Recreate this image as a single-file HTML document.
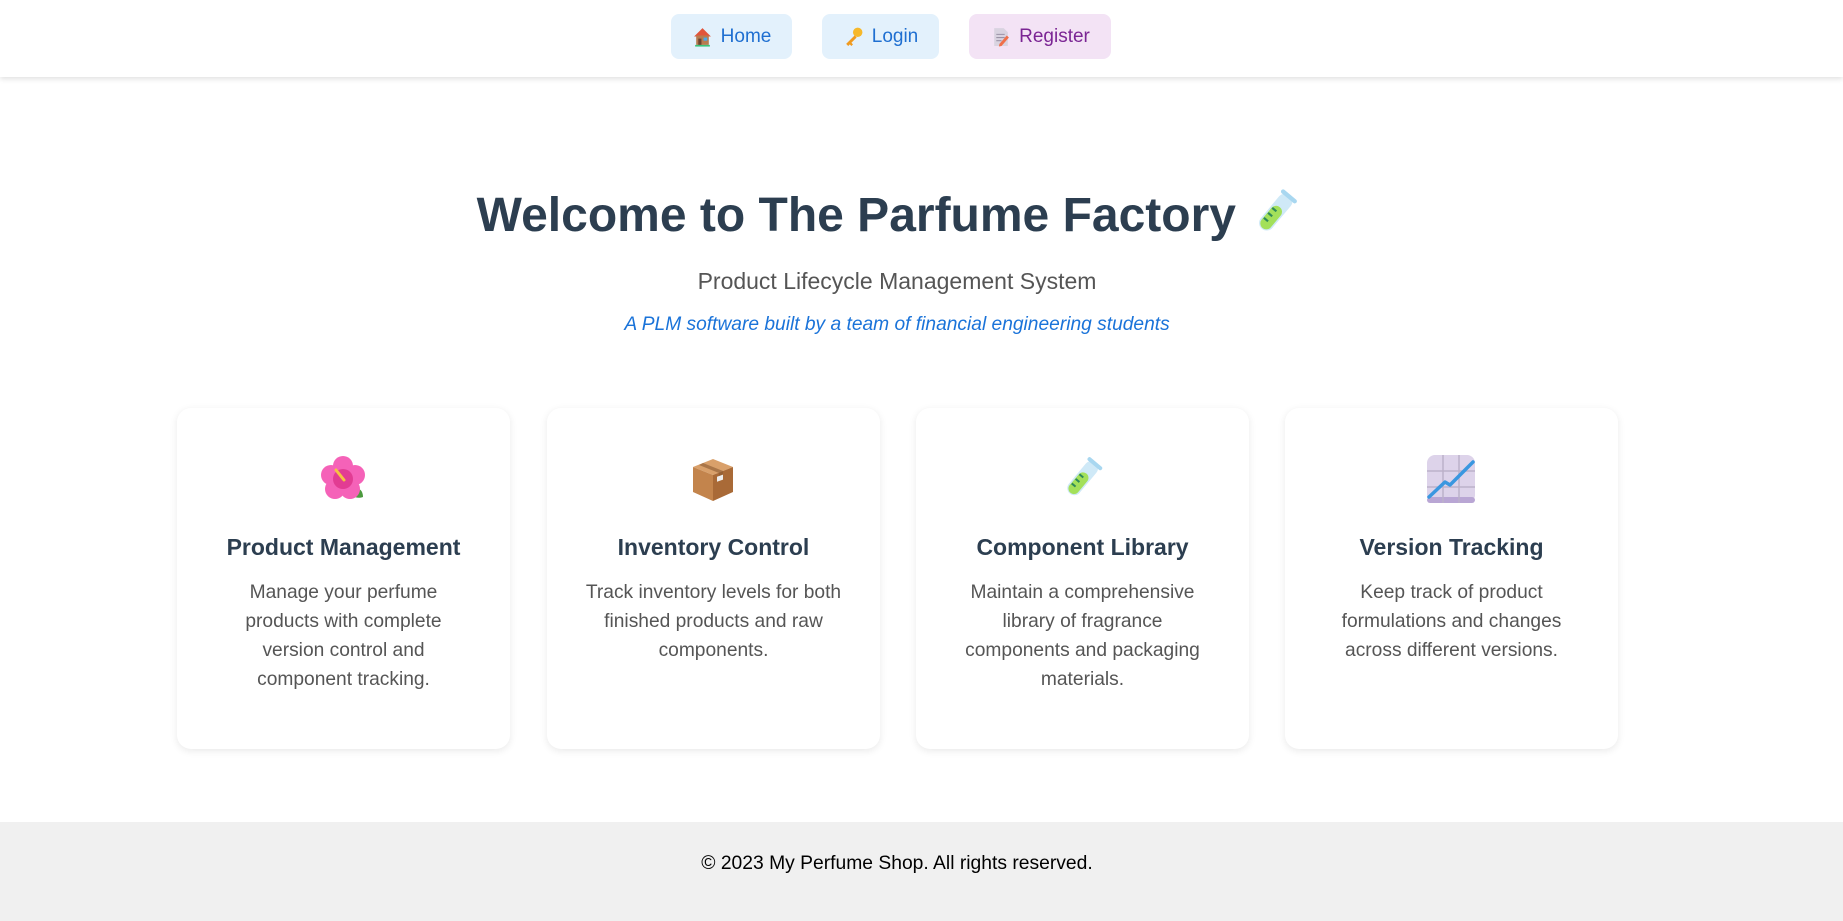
<!DOCTYPE html>
<html><head><meta charset="utf-8">
<style>
*{margin:0;padding:0;box-sizing:border-box}
body{width:1843px;height:921px;background:#fff;font-family:"Liberation Sans",Arial,sans-serif;position:relative;overflow:hidden}
.nav{position:absolute;left:0;top:0;width:1843px;height:77px;background:#fff;box-shadow:0 2px 5px rgba(0,0,0,0.12)}
.btn{position:absolute;top:14px;height:45px;border-radius:8px;font-size:19px;display:flex;align-items:center;justify-content:center;gap:8px}
.b1{left:671px;width:121px;background:#e3f1fc;color:#1f6fd1}
.b2{left:822px;width:117px;background:#e3f1fc;color:#1f6fd1}
.b3{left:969px;width:142px;background:#f3e3f5;color:#7b2594}
h1{position:absolute;left:0;width:1778px;top:186px;text-align:center;font-size:48px;font-weight:bold;color:#2c3e50;line-height:60px}
.sub{position:absolute;left:0;width:1794px;top:268px;text-align:center;font-size:23px;color:#555;line-height:27px}
.tag{position:absolute;left:0;width:1794px;top:313px;text-align:center;font-size:19.2px;font-style:italic;color:#1a73d9;line-height:24px}
.card{position:absolute;top:408px;width:333px;height:341px;background:#fff;border-radius:14px;box-shadow:0 2px 8px rgba(0,0,0,0.09);text-align:center}
.ic{position:absolute;left:142px;top:47px;width:48px;height:48px}
.card h3{position:absolute;top:124px;left:0;width:100%;font-size:23px;font-weight:bold;color:#2c3e50;line-height:30px}
.card p{position:absolute;top:170px;left:37px;right:37px;font-size:19.2px;color:#555;line-height:29px}
.foot{position:absolute;left:0;top:822px;width:1794px;height:99px;text-align:center;font-size:19.3px;color:#000;line-height:84px}
.footbg{position:absolute;left:0;top:822px;width:1843px;height:99px;background:#f0f0f0}
</style></head><body>
<div class="nav">
<div class="btn b1"><svg width="21" height="21" viewBox="0 0 20 20"><path d="M2 10 L10 2 L18 10Z" fill="#e2543a"/><rect x="4" y="9" width="12" height="9" fill="#b87b4f"/><rect x="11" y="11" width="3.5" height="3" fill="#4aa8e8"/><rect x="6" y="12" width="3" height="6" fill="#6d4330"/><rect x="3" y="18" width="14" height="1.6" fill="#3cc27a"/></svg>Home</div>
<div class="btn b2"><svg width="21" height="21" viewBox="0 0 20 20"><circle cx="14" cy="6" r="4.5" fill="#f6b82a"/><path d="M11 9 L3 17 L5 19 L6.5 17.5 L8 19 L9.5 17.5 L8 16 L13 11Z" fill="#f09a1f"/></svg>Login</div>
<div class="btn b3"><svg width="21" height="21" viewBox="0 0 20 20"><path d="M4 2 H13 L17 6 V19 H4Z" fill="#d9d3e0"/><path d="M6 8H14M6 11H14M6 14H11" stroke="#9b93a6" stroke-width="1"/><path d="M9 17 L16 9 L18 11 L11 19 L8.5 19.5Z" fill="#f0704a"/></svg>Register</div>
</div>
<h1>Welcome to The Parfume Factory <svg width="52" height="52" viewBox="0 0 48 48" style="vertical-align:-8px"><g transform="rotate(40 24 24)"><rect x="17" y="3" width="14" height="40" rx="7" fill="#cfe9f7"/><rect x="18.5" y="17" width="11" height="25" rx="5.5" fill="#a3e05a"/><rect x="15" y="2" width="18" height="4" rx="2" fill="#a8d7f0"/><path d="M19 22h5M19 28h5M19 34h5" stroke="#2e8a5a" stroke-width="2"/></g></svg></h1>
<div class="sub">Product Lifecycle Management System</div>
<div class="tag">A PLM software built by a team of financial engineering students</div>

<div class="card" style="left:177px">
<svg class="ic" viewBox="0 0 48 48"><path d="M32 36 C40 30 44 36 44 42 C38 44 33 42 32 36Z" fill="#4c9a3f"/><g fill="#f562b8"><circle cx="24" cy="11" r="10"/><circle cx="36" cy="20" r="10"/><circle cx="31" cy="34" r="10"/><circle cx="16" cy="34" r="10"/><circle cx="12" cy="20" r="10"/></g><circle cx="24" cy="24" r="10" fill="#e23c93"/><path d="M17 15 L25 25" stroke="#f5c242" stroke-width="3" stroke-linecap="round"/></svg>
<h3>Product Management</h3>
<p>Manage your perfume products with complete version control and component tracking.</p></div>

<div class="card" style="left:547px">
<svg class="ic" viewBox="0 0 48 48"><path d="M24 4 L44 12 L24 20 L4 12Z" fill="#d9a06a"/><path d="M4 12 L24 20 V46 L4 37Z" fill="#c3844c"/><path d="M44 12 L24 20 V46 L44 37Z" fill="#a96a37"/><path d="M14 8 L34 16 V24 L30 26 V18 L10 10Z" fill="#8a5a32" opacity=".6"/><rect x="28" y="32" width="6" height="5" fill="#eee" transform="skewY(-20)"/></svg>
<h3>Inventory Control</h3>
<p>Track inventory levels for both finished products and raw components.</p></div>

<div class="card" style="left:916px">
<svg class="ic" viewBox="0 0 48 48"><g transform="rotate(40 24 24)"><rect x="17" y="3" width="14" height="40" rx="7" fill="#cfe9f7"/><rect x="18.5" y="17" width="11" height="25" rx="5.5" fill="#a3e05a"/><rect x="15" y="2" width="18" height="4" rx="2" fill="#a8d7f0"/><path d="M19 22h5M19 28h5M19 34h5" stroke="#2e8a5a" stroke-width="2"/></g></svg>
<h3>Component Library</h3>
<p>Maintain a comprehensive library of fragrance components and packaging materials.</p></div>

<div class="card" style="left:1285px">
<svg class="ic" viewBox="0 0 48 48"><rect x="0" y="0" width="48" height="48" rx="8" fill="#ddd3ea"/><rect x="0" y="42" width="48" height="6" rx="3" fill="#b9a6d4"/><path d="M16 0V48M32 0V48M0 16H48M0 32H48" stroke="#bcb1c9" stroke-width="1.5"/><path d="M2 42 L18 27 L23 30 L46 7" stroke="#3a97e0" stroke-width="3.5" fill="none" stroke-linecap="round" stroke-linejoin="round"/></svg>
<h3>Version Tracking</h3>
<p>Keep track of product formulations and changes across different versions.</p></div>

<div class="footbg"></div>
<div class="foot">© 2023 My Perfume Shop. All rights reserved.</div>
</body></html>
